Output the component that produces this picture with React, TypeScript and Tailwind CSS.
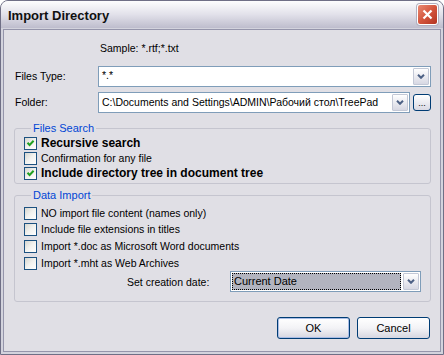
import React from "react";

const FONT = "font-['Liberation_Sans',Arial,sans-serif]";

const searchOptions = [
  { label: "Recursive search", checked: true },
  { label: "Confirmation for any file", checked: false },
  { label: "Include directory tree in document tree", checked: true },
];

const importOptions = [
  { label: "NO import file content (names only)", h: "h-[16px]" },
  { label: "Include file extensions in titles", h: "h-[17px]" },
  { label: "Import *.doc as Microsoft Word documents", h: "h-[17px]" },
  { label: "Import *.mht as Web Archives", h: "h-[16px]" },
];

const CheckBox = ({ checked }: { checked: boolean }) => (
  <span className="flex w-[13px] h-[13px] shrink-0 items-center justify-center border border-[#1c5180] bg-gradient-to-br from-[#d6d6d0] via-[#f2f2ef] to-white">
    {checked && (
      <svg width="9" height="9" viewBox="0 0 9 9">
        <path d="M1.5 3.8 L3.6 6 L7.6 1.8" stroke="#21a121" strokeWidth="2" fill="none" />
      </svg>
    )}
  </span>
);

const ArrowButton = () => (
  <span className="flex w-[16px] h-full shrink-0 items-center justify-center border border-[#c3c8d6] bg-gradient-to-b from-white to-[#d7d8e3] rounded-[1px]">
    <svg width="8" height="5" viewBox="0 0 8 5">
      <path d="M1 0.8 L4 3.8 L7 0.8" stroke="#4d6185" strokeWidth="2" fill="none" />
    </svg>
  </span>
);

const XpButton = ({ label, isDefault }: { label: string; isDefault?: boolean }) => (
  <button
    className={`w-[73px] h-[22px] rounded-[3px] border border-[#003c74] bg-gradient-to-b from-white via-[#f3f3f6] to-[#d6d6e0] text-[11px] text-black ${
      isDefault ? "shadow-[inset_0_0_0_1px_#a9bde6]" : ""
    }`}
  >
    {label}
  </button>
);

export default function App() {
  return (
    <div className={`w-[444px] h-[355px] ${FONT} text-[10.5px] leading-[13px] text-black`}>
      <div className="flex h-full flex-col rounded-t-[8px] border border-[#6f6f86] bg-[#d3d3dd]">
        {/* title bar */}
        <div className="flex h-[27px] shrink-0 items-center justify-between rounded-t-[7px] bg-gradient-to-b from-[#fdfdfe] via-[#e2e1ea] to-[#bebdcd] pl-[7px] pr-[5px]">
          <span className="pt-[2px] text-[13px] font-bold leading-[16px] text-[#101010]">Import Directory</span>
          <span className="flex w-[21px] h-[21px] items-center justify-center rounded-[3px] border border-white bg-gradient-to-br from-[#e98a73] via-[#d4553d] to-[#b23321] shadow-[0_0_0_1px_#b0b0c0]">
            <svg width="11" height="11" viewBox="0 0 11 11">
              <path d="M1.5 1.5 L9.5 9.5 M9.5 1.5 L1.5 9.5" stroke="white" strokeWidth="2.2" />
            </svg>
          </span>
        </div>

        {/* body */}
        <div className="flex flex-1 flex-col px-[2px] pb-[2px] pt-[1px]">
          <div className="flex flex-1 flex-col border border-[#9595ab] bg-[#e0dfe5] pl-[10px] pr-[9px]">
            <div className="pl-[86px] pt-[12px]">Sample: *.rtf;*.txt</div>

            <div className="mt-[11px] flex h-[21px] items-center pl-[1px]">
              <span className="w-[83px]">Files Type:</span>
              <div className="flex h-full flex-1 border border-[#7f9db9] bg-white p-[1px]">
                <span className="flex-1 pl-[2px] pt-[1px]">*.*</span>
                <ArrowButton />
              </div>
            </div>

            <div className="mt-[5px] flex h-[21px] items-center pl-[1px]">
              <span className="w-[83px]">Folder:</span>
              <div className="flex h-full flex-1 border border-[#7f9db9] bg-white p-[1px]">
                <span className="flex-1 overflow-hidden whitespace-nowrap pl-[2px] pt-[2px]">
                  C:\Documents and Settings\ADMIN\Рабочий стол\TreePad
                </span>
                <ArrowButton />
              </div>
              <button className="ml-[3px] flex w-[18px] h-[17px] items-end justify-center rounded-[3px] border border-[#003c74] bg-gradient-to-b from-white to-[#d9d9e3] pb-[2px] text-[9px] leading-[9px]">
                ...
              </button>
            </div>

            <fieldset className="mt-[9px] rounded-[3px] border border-[#c5c5cf] pb-[2px] pl-[9px] pt-[1px]">
              <legend className="ml-[7px] px-[2px] text-[11px] leading-[13px] text-[#0046d5]">Files Search</legend>
              {searchOptions.map((opt) => (
                <div key={opt.label} className="flex h-[15px] items-center gap-[4px]">
                  <CheckBox checked={opt.checked} />
                  <span className={opt.checked ? "text-[12px] font-bold" : ""}>{opt.label}</span>
                </div>
              ))}
            </fieldset>

            <fieldset className="mt-[5px] rounded-[3px] border border-[#c5c5cf] pb-[9px] pl-[9px] pr-[9px] pt-[3px]">
              <legend className="ml-[7px] px-[2px] text-[11px] leading-[13px] text-[#0046d5]">Data Import</legend>
              {importOptions.map((opt) => (
                <div key={opt.label} className={`flex ${opt.h} items-center gap-[4px]`}>
                  <CheckBox checked={false} />
                  <span>{opt.label}</span>
                </div>
              ))}
              <div className="flex h-[21px] items-center">
                <span className="pl-[103px] pt-[2px]">Set creation date:</span>
                <div className="ml-auto flex h-full w-[191px] border border-[#7f9db9] bg-white p-[1px]">
                  <span className="mr-[2px] flex-1 border border-dotted border-black bg-[#b2b4bf] pl-[1px] text-[11px] leading-[15px]">
                    Current Date
                  </span>
                  <ArrowButton />
                </div>
              </div>
            </fieldset>

            <div className="mt-[15px] flex justify-end gap-[7px] pr-[1px]">
              <XpButton label="OK" isDefault />
              <XpButton label="Cancel" />
            </div>
          </div>
        </div>
      </div>
    </div>
  );
}
